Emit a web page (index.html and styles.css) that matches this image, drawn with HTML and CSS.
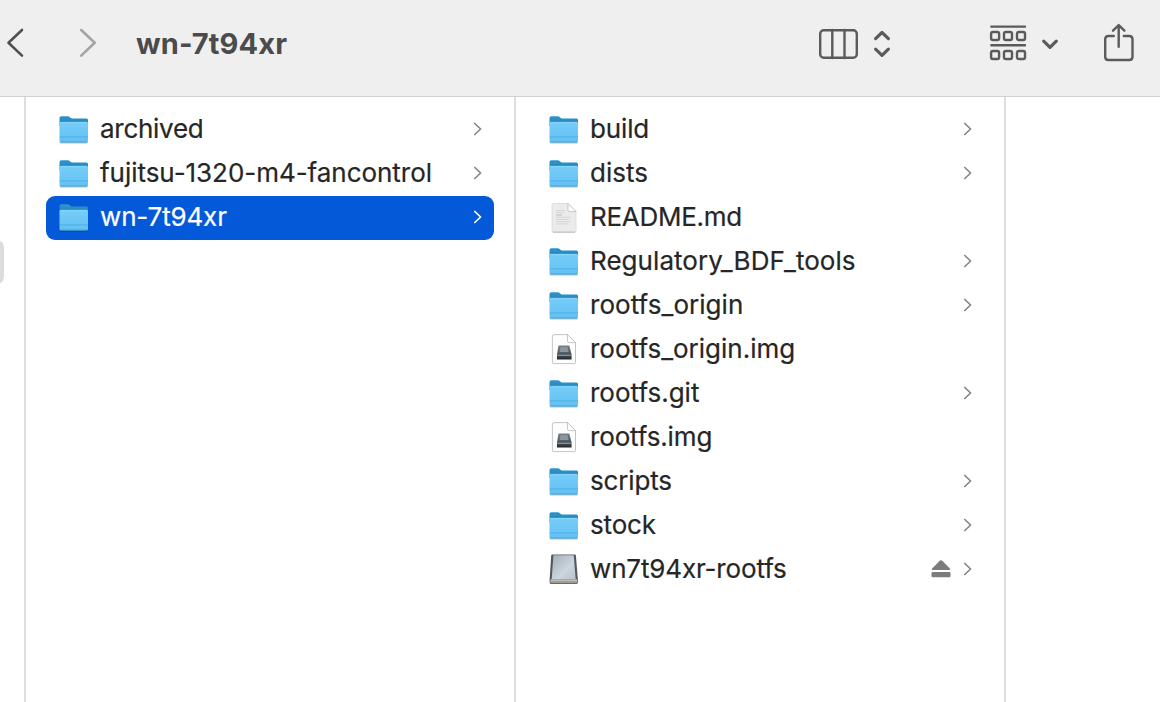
FILE: index.html
```html
<!DOCTYPE html>
<html lang="en">
<head>
<meta charset="utf-8">
<title>wn-7t94xr</title>
<link rel="stylesheet" href="styles.css">
</head>
<body>
<svg class="defs" width="0" height="0" aria-hidden="true">
  <defs>
    <linearGradient id="gFront" x1="0" y1="0" x2="0" y2="1"><stop offset="0" stop-color="#76cef9"/><stop offset="1" stop-color="#62c0f3"/></linearGradient>
    <linearGradient id="gBack" x1="0" y1="0" x2="0" y2="1"><stop offset="0" stop-color="#2f96cb"/><stop offset="1" stop-color="#1c7fb5"/></linearGradient>
    <linearGradient id="gDisk" x1="0" y1="0" x2="1" y2="1"><stop offset="0" stop-color="#a5adb5"/><stop offset=".6" stop-color="#cbd6df"/><stop offset="1" stop-color="#b8c1c9"/></linearGradient>
    <linearGradient id="gDrive" x1="0" y1="0" x2="0" y2="1"><stop offset="0" stop-color="#77818a"/><stop offset=".6" stop-color="#4c565f"/><stop offset="1" stop-color="#22272b"/></linearGradient>
    <symbol id="folder" viewBox="0 0 32 32">
      <path d="M2.500 28.700h26.500" stroke="#000" stroke-opacity=".25" stroke-width="1.600" stroke-linecap="round"/>
      <path d="M1.500 4q0-1.800 1.800-1.800h6.500q1.200 0 1.900.8l.7.700q.7.700 1.800.7H28.500q1.500 0 1.500 1.500V12H1.500z" fill="url(#gBack)"/>
      <path d="M1.500 9.300q0-1.400 1.400-1.400H28.600q1.400 0 1.400 1.400V26.900q0 1.500-1.500 1.500H3q-1.500 0-1.500-1.500z" fill="url(#gFront)"/>
      <path d="M2.500 8.300h26.500" stroke="#95dcff" stroke-width=".7"/>
      <path d="M1.800 22.900h28" stroke="#4aa9dc" stroke-width=".8"/>
      <path d="M2.500 28h26.500" stroke="#3f9fd3" stroke-width=".8"/>
    </symbol>
    <symbol id="textfile" viewBox="0 0 32 32">
      <path d="M5.500 1.500H20l8 8V28.500q0 1.500-1.500 1.500H5.500Q4 30 4 28.500V3q0-1.500 1.500-1.500z" fill="#ebebeb" stroke="#d8d8d8" stroke-width=".8"/>
      <path d="M4.800 30.200h22.400" stroke="#b5b5b5" stroke-width=".9"/>
      <path d="M20 1.500V8q0 1.500 1.500 1.500H28z" fill="#fff" stroke="#bbb" stroke-width=".8"/>
      <path d="M8 8.500h9M8 10.700h8M8 15.300h15M8 17.500h13M8 19.700h15M8 21.900h12" stroke="#cfcfcf" stroke-width=".8"/>
      <path d="M8 13h6" stroke="#e0b0b0" stroke-width="1"/>
    </symbol>
    <symbol id="imgfile" viewBox="0 0 32 32">
      <path d="M5.800.6H19.500l8 8V28.200q0 1.400-1.400 1.400H5.800q-1.400 0-1.400-1.400V2q0-1.400 1.400-1.400z" fill="#fdfdfd" stroke="#bdbdbd" stroke-width=".9"/>
      <path d="M19.500.6V7.100q0 1.500 1.500 1.500h6.500z" fill="#fff" stroke="#bdbdbd" stroke-width=".8"/>
      <path d="M10.500 11.500h10.800l2.300 9v5H9v-5z" fill="url(#gDrive)"/>
      <path d="M12.500 13h7l1 5h-9z" fill="#8b969f"/>
      <path d="M9.200 21.300h14.200" stroke="#b4bec5" stroke-width=".8"/>
    </symbol>
    <symbol id="disk" viewBox="0 0 32 32">
      <path d="M4.300.4H26.800q1 0 1.100 1L29.900 26v2.500q0 1.400-1.400 1.400H3q-1.400 0-1.400-1.400V26L3.200 1.400q.1-1 1.100-1z" fill="#55585b"/>
      <path d="M5.400 1.200H25.700L27.700 25.300H3.700z" fill="url(#gDisk)"/>
      <path d="M2.300 26h27v2.300q0 .9-.9.900H3.200q-.9 0-.9-.9z" fill="#9f9d97"/>
      <path d="M2.500 26h26.500" stroke="#e6e6e3" stroke-width=".9"/>
    </symbol>
    <symbol id="chev" viewBox="0 0 10 14"><path d="M1.800 1.500 7.600 7 1.800 12.500" fill="none" stroke="currentColor" stroke-width="1.700" stroke-linecap="round" stroke-linejoin="round"/></symbol>
  </defs>
</svg>
<div class="window">
  <header class="toolbar">
    <svg class="nav" width="104" height="96" fill="none" stroke-width="2.600" stroke-linecap="round" stroke-linejoin="round">
      <path d="M22 30 8.500 42.800 22 55.600" stroke="#505050"/>
      <path d="M81.200 30 94.700 42.800 81.200 55.600" stroke="#a4a4a4"/>
    </svg>
    <h1 class="title">wn-7t94xr</h1>
    <svg class="tool view" width="76" height="40" viewBox="816 24 76 40">
      <rect x="820.200" y="30.200" width="36.600" height="27.600" rx="3.500"/>
      <path d="M832.300 30v28M844.500 30v28"/>
      <path class="bold" d="M875.600 38.600 882 32.500l6.400 6.100M875.600 49.200 882 55.300l6.400-6.100"/>
    </svg>
    <svg class="tool group" width="74" height="44" viewBox="986 22 74 44">
      <path d="M991.300 26.600h33.700M991.300 45.300h33.700"/>
      <rect x="991.100" y="32" width="8" height="8" rx="1.800"/><rect x="1004" y="32" width="8" height="8" rx="1.800"/><rect x="1017" y="32" width="8" height="8" rx="1.800"/>
      <rect x="991.100" y="51" width="8" height="8" rx="1.800"/><rect x="1004" y="51" width="8" height="8" rx="1.800"/><rect x="1017" y="51" width="8" height="8" rx="1.800"/>
      <path class="bold" d="M1043.700 41.200 1050 47.400l6.300-6.200"/>
    </svg>
    <svg class="tool share" width="38" height="44" viewBox="1100 22 38 44">
      <path d="M1113.800 36h-5.300q-3.300 0-3.300 3.300v17.400q0 3.300 3.300 3.300h20.700q3.300 0 3.300-3.300V39.300q0-3.300-3.300-3.300h-5.400"/>
      <path d="M1118.700 46.700V25.500M1113 30.700l5.700-5.600 5.700 5.600"/>
    </svg>
  </header>
  <main class="columns">
    <section class="column edge"><div class="stub"></div></section>
    <ul class="column">
      <li class="row"><svg class="icon"><use href="#folder"/></svg><span class="name tighter">archived</span><svg class="chev"><use href="#chev"/></svg></li>
      <li class="row"><svg class="icon"><use href="#folder"/></svg><span class="name snug">fujitsu-1320-m4-fancontrol</span><svg class="chev"><use href="#chev"/></svg></li>
      <li class="row selected"><svg class="icon"><use href="#folder"/></svg><span class="name tight">wn-7t94xr</span><svg class="chev"><use href="#chev"/></svg></li>
    </ul>
    <ul class="column">
      <li class="row"><svg class="icon"><use href="#folder"/></svg><span class="name tight">build</span><svg class="chev"><use href="#chev"/></svg></li>
      <li class="row"><svg class="icon"><use href="#folder"/></svg><span class="name">dists</span><svg class="chev"><use href="#chev"/></svg></li>
      <li class="row"><svg class="icon"><use href="#textfile"/></svg><span class="name tighter">README.md</span></li>
      <li class="row"><svg class="icon"><use href="#folder"/></svg><span class="name loose">Regulatory_BDF_tools</span><svg class="chev"><use href="#chev"/></svg></li>
      <li class="row"><svg class="icon"><use href="#folder"/></svg><span class="name loose">rootfs_origin</span><svg class="chev"><use href="#chev"/></svg></li>
      <li class="row"><svg class="icon"><use href="#imgfile"/></svg><span class="name">rootfs_origin.img</span></li>
      <li class="row"><svg class="icon"><use href="#folder"/></svg><span class="name">rootfs.git</span><svg class="chev"><use href="#chev"/></svg></li>
      <li class="row"><svg class="icon"><use href="#imgfile"/></svg><span class="name tight">rootfs.img</span></li>
      <li class="row"><svg class="icon"><use href="#folder"/></svg><span class="name tight">scripts</span><svg class="chev"><use href="#chev"/></svg></li>
      <li class="row"><svg class="icon"><use href="#folder"/></svg><span class="name tight">stock</span><svg class="chev"><use href="#chev"/></svg></li>
      <li class="row"><svg class="icon"><use href="#disk"/></svg><span class="name tight">wn7t94xr-rootfs</span><svg class="eject" viewBox="0 0 20 20"><path d="M9 1.600q1-.9 2 0l7.900 8q.8 1.400-.6 1.400H1.700q-1.400 0-.6-1.400z"/><rect x=".5" y="13" width="19" height="5.300" rx="1.300"/></svg><svg class="chev"><use href="#chev"/></svg></li>
    </ul>
    <section class="rest"></section>
  </main>
</div>
</body>
</html>
```

FILE: styles.css
```css
* { box-sizing: border-box; }
body { margin: 0; background: #fff; font-family: Inter, "Liberation Sans", sans-serif; }
.defs { display: block; height: 0; }
.window { width: 1160px; height: 702px; display: flex; flex-direction: column; overflow: hidden; }
.toolbar { flex: none; height: 97px; display: flex; align-items: flex-start; background: #efefef; border-bottom: 1px solid #d0d0d0; }
.nav { flex: none; }
.title { margin: 25px 0 0 32px; width: 680px; font-size: 29px; line-height: 38px; font-weight: 700; letter-spacing: .12px; color: #4b4b4b; }
.tool { flex: none; fill: none; stroke: #5b5b5b; stroke-width: 2.4; stroke-linecap: round; stroke-linejoin: round; }
.bold { stroke-width: 3.2; }
.view { margin-top: 24px; }
.group { margin: 22px 0 0 94px; }
.share { margin: 22px 0 0 40px; }
.columns { flex: 1; display: grid; grid-template-columns: 26px 490px 490px 1fr; }
.column { margin: 0; padding: 10px 20px 0; list-style: none; border-right: 2px solid #dedede; }
.edge { padding: 144px 0 0; }
.stub { width: 4px; height: 42px; border-radius: 0 4px 4px 0 / 0 8px 8px 0; background: #dcdcdc; }
.row { display: flex; align-items: center; height: 44px; padding: 0 11px 0 12px; border-radius: 9px; color: #262626; }
.row:first-child { margin-top: 1px; }
.icon { flex: none; width: 32px; height: 32px; }
.name { flex: 1; margin-left: 10px; padding-bottom: 2px; font-size: 26px; line-height: 34px; white-space: nowrap; -webkit-text-stroke: .2px currentColor; }
.tighter { letter-spacing: -.28px; }
.tight { letter-spacing: -.15px; }
.snug { letter-spacing: -.04px; }
.loose { letter-spacing: .05px; }
.chev { flex: none; width: 10px; height: 14px; margin-bottom: 2px; color: #868686; }
.selected { background: #0459d9; color: #fff; }
.selected .chev { color: #fff; }
.eject { width: 20px; height: 20px; margin: 0 12px 2px 0; fill: #7c7c7c; }
```
